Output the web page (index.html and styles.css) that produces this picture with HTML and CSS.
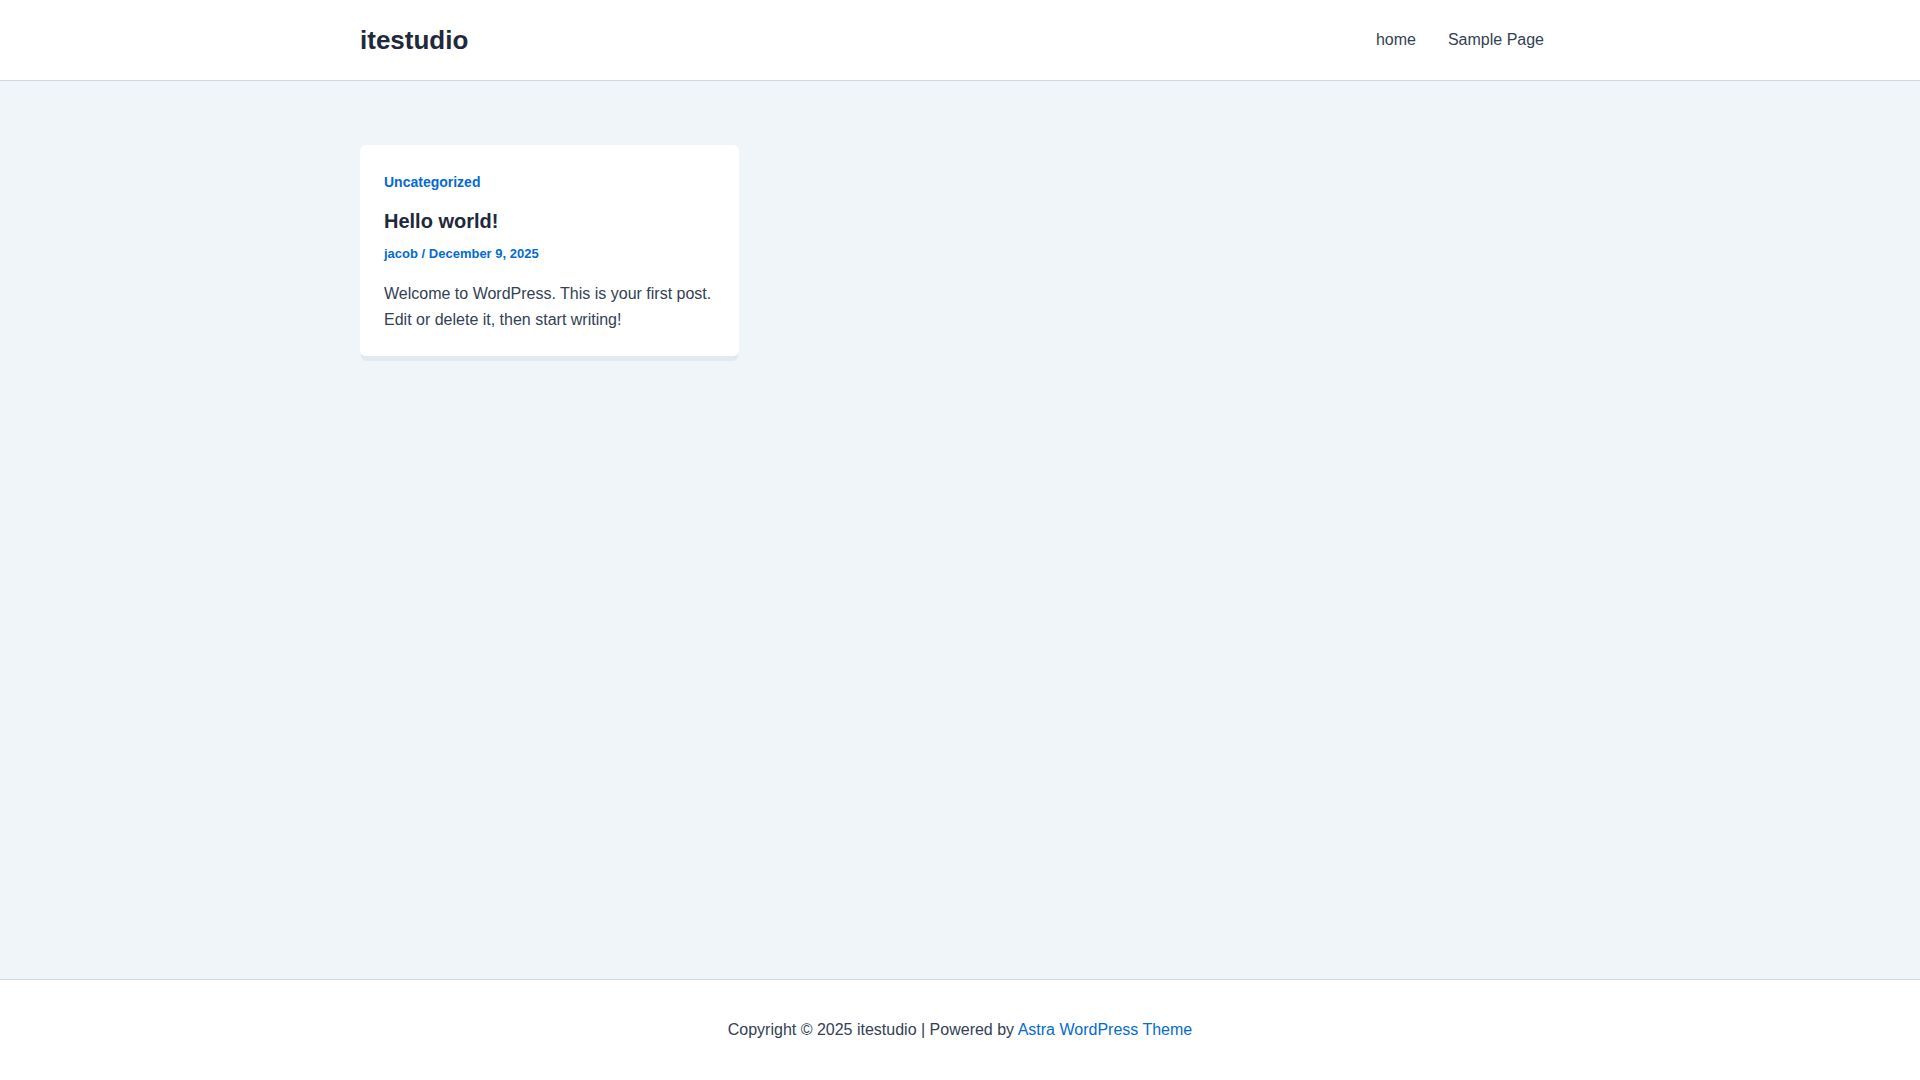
FILE: index.html
```html
<!DOCTYPE html>
<html lang="en">
<head>
<meta charset="utf-8">
<title>itestudio</title>
<link rel="stylesheet" href="styles.css">
</head>
<body>
<div class="page">
  <header class="site-header">
    <div class="container header-inner">
      <a class="site-title" href="#">itestudio</a>
      <nav class="main-nav">
        <a class="nav-item" href="#">home</a>
        <a class="nav-item" href="#">Sample Page</a>
      </nav>
    </div>
  </header>
  <main class="site-main">
    <div class="container posts-grid">
      <article class="post-card">
        <a class="post-cat" href="#">Uncategorized</a>
        <h2 class="post-title">Hello world!</h2>
        <div class="post-meta"><a href="#">jacob</a> / <a href="#">December 9, 2025</a></div>
        <p class="post-excerpt">Welcome to WordPress. This is your first post. Edit or delete it, then start writing!</p>
      </article>
    </div>
  </main>
  <footer class="site-footer">
    <div class="footer-text">Copyright © 2025 itestudio | Powered by <a href="#">Astra WordPress Theme</a></div>
  </footer>
</div>
</body>
</html>
```

FILE: styles.css
```css
* { box-sizing: border-box; }
html, body { margin: 0; padding: 0; }
body {
  font-family: "Liberation Sans", Arial, sans-serif;
  color: #334155;
  background: #ffffff;
}
a { text-decoration: none; }
.page {
  min-height: 1080px;
  display: flex;
  flex-direction: column;
}
.container {
  width: 1200px;
  margin: 0 auto;
}
.site-header {
  background: #ffffff;
  border-bottom: 1px solid #d1d7e0;
}
.header-inner {
  height: 80px;
  display: flex;
  align-items: center;
  justify-content: space-between;
}
.site-title {
  font-size: 26px;
  font-weight: 700;
  color: #1e293b;
}
.main-nav {
  display: flex;
}
.nav-item {
  font-size: 16px;
  color: #334155;
  padding: 0 16px;
}
.site-main {
  flex: 1;
  background: #f0f5fa;
  padding-top: 64px;
}
.posts-grid {
  display: grid;
  grid-template-columns: repeat(3, 1fr);
  gap: 32px;
  align-items: start;
}
.post-card {
  background: #ffffff;
  border-radius: 6px;
  padding: 27px 24px 23px;
  box-shadow: 0 6px 0 -1px #e4e9f0;
}
.post-cat {
  display: block;
  font-size: 14px;
  line-height: 20px;
  font-weight: 700;
  color: #046bd2;
}
.post-title {
  margin: 15px 0 0;
  font-size: 20px;
  line-height: 28px;
  font-weight: 700;
  color: #1e293b;
}
.post-meta {
  margin-top: 9px;
  font-size: 13px;
  line-height: 20px;
  font-weight: 700;
  color: #046bd2;
}
.post-meta a { color: #046bd2; }
.post-excerpt {
  margin: 17px 0 0;
  font-size: 16px;
  line-height: 26px;
  color: #334155;
}
.site-footer {
  background: #ffffff;
  border-top: 1px solid #d1d7e0;
  height: 101px;
  display: flex;
  align-items: center;
  justify-content: center;
}
.footer-text {
  font-size: 16px;
  color: #334155;
}
.footer-text a { color: #046bd2; }
```
